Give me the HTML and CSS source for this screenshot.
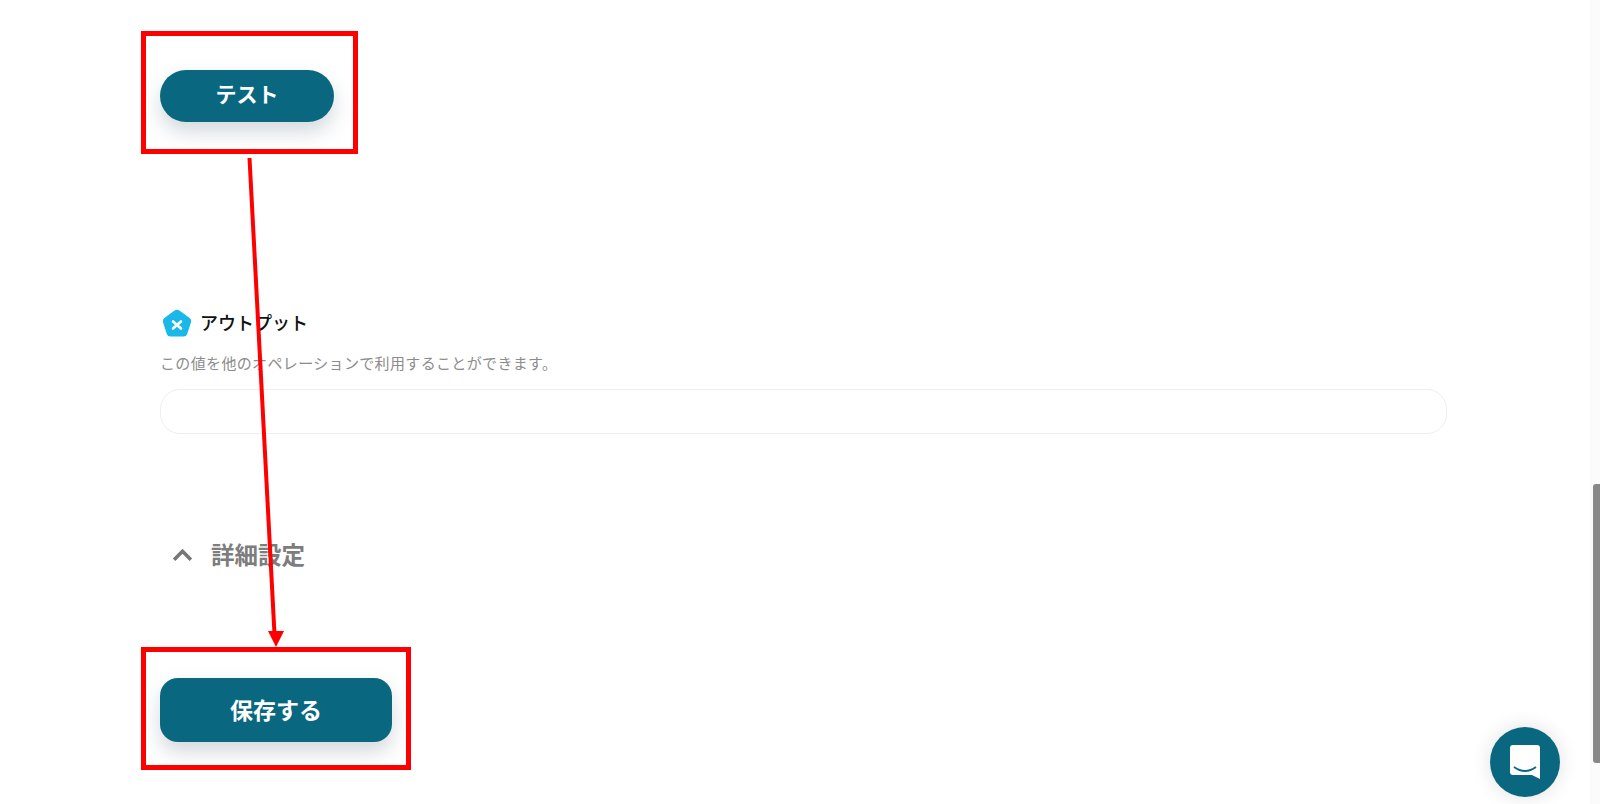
FILE: index.html
```html
<!DOCTYPE html>
<html lang="ja">
<head>
    <meta charset="UTF-8">
    <meta name="viewport" content="width=device-width, initial-scale=1.0">
    <title>アウトプット</title>
    <link rel="stylesheet" href="styles.css">
</head>
<body>
    <div class="page">
        <button class="test-btn">テスト</button>

        <section class="output">
            <div class="output-title">
                <svg class="output-icon" viewBox="0 0 30 30">
                    <path d="M12.6 1.6 Q15 0 17.4 1.6 L27.6 9 Q29.8 10.6 29 13.2 L25.2 25 Q24.4 27.6 21.6 27.6 L8.4 27.6 Q5.6 27.6 4.8 25 L1 13.2 Q0.2 10.6 2.4 9 Z" fill="#1ab8e8"/>
                    <path d="M11 12.5 L19 19.5 M19 12.5 L11 19.5" stroke="#fff" stroke-width="2.6" stroke-linecap="round"/>
                </svg>
                <span class="output-name">アウトプット</span>
            </div>
            <p class="output-desc">この値を他のオペレーションで利用することができます。</p>
            <div class="output-field"></div>
        </section>

        <div class="advanced">
            <svg class="advanced-icon" viewBox="0 0 20 14">
                <path d="M2 12 L10 4 L18 12" fill="none" stroke="#777" stroke-width="3.4"/>
            </svg>
            <span>詳細設定</span>
        </div>

        <button class="save-btn">保存する</button>
    </div>

    <!-- annotations drawn on top of the screenshot -->
    <div class="mark mark-test"></div>
    <div class="mark mark-save"></div>
    <svg class="arrow" width="1600" height="804" viewBox="0 0 1600 804">
        <path d="M249.5 158 L274.5 634" stroke="#f00" stroke-width="4" fill="none"/>
        <path d="M268 631 L284 631 L276 647 Z" fill="#f00"/>
    </svg>

    <div class="scroll-track"></div>
    <div class="scroll-thumb"></div>

    <button class="chat-btn">
        <svg viewBox="0 0 32 36" width="32" height="36">
            <path d="M4 1 H28 Q31 1 31 4 V35 L23 31 H4 Q1 31 1 28 V4 Q1 1 4 1 Z" fill="#fff"/>
            <path d="M5 23 Q16 31 27 23" fill="none" stroke="#0b6880" stroke-width="2"/>
        </svg>
    </button>
</body>
</html>
```

FILE: styles.css
```css
html, body {
    margin: 0;
    padding: 0;
    height: 100%;
    overflow: hidden;
    background: #fff;
}
body {
    font-family: "Noto Sans CJK JP", "Noto Sans", sans-serif;
    color: #111;
}
button {
    font-family: inherit;
    border: none;
    padding: 0;
}
.page {
    width: 1287px;
    padding: 70px 0 0 160px;
}
.test-btn {
    display: block;
    width: 174px;
    height: 52px;
    padding-bottom: 7px;
    border-radius: 26px;
    background: #0a6780;
    color: #fff;
    font-size: 21px;
    font-weight: 700;
    box-shadow: 0 10px 20px rgba(60, 80, 100, 0.22);
}
.output {
    margin-top: 188px;
}
.output-title {
    display: flex;
    align-items: center;
    gap: 8px;
    height: 28px;
    padding-left: 2px;
    font-size: 18px;
    font-weight: 500;
}
.output-icon {
    width: 30px;
    height: 30px;
}
.output-name {
    padding-bottom: 4px;
}
.output-desc {
    margin: 15px 0 0;
    font-size: 15px;
    line-height: 20px;
    letter-spacing: 0.35px;
    color: #8c8c8c;
}
.output-field {
    box-sizing: border-box;
    height: 45px;
    margin-top: 16px;
    border: 1px solid #eeeeee;
    border-radius: 20px;
    background: #fff;
}
.advanced {
    display: flex;
    align-items: center;
    gap: 18px;
    height: 36px;
    margin-top: 102px;
    padding-left: 12px;
    font-size: 23.5px;
    font-weight: 700;
    color: #7d7d7d;
}
.advanced-icon {
    width: 21px;
    height: 15px;
}
.save-btn {
    display: block;
    width: 232px;
    height: 64px;
    margin-top: 106px;
    padding-bottom: 3px;
    border-radius: 18px;
    background: #0a6780;
    color: #fff;
    font-size: 23px;
    font-weight: 700;
    box-shadow: 0 10px 20px rgba(60, 80, 100, 0.22);
}
.mark {
    position: absolute;
    box-sizing: border-box;
    border: 5px solid #f00;
}
.mark-test {
    left: 141px;
    top: 31px;
    width: 217px;
    height: 123px;
}
.mark-save {
    left: 141px;
    top: 647px;
    width: 270px;
    height: 123px;
}
.arrow {
    position: absolute;
    left: 0;
    top: 0;
}
.scroll-track {
    position: absolute;
    left: 1590px;
    top: 0;
    width: 10px;
    height: 804px;
    background: #fbfbfb;
}
.scroll-thumb {
    position: absolute;
    left: 1593px;
    top: 484px;
    width: 7px;
    height: 279px;
    border-radius: 3px 0 0 3px;
    background: #888;
}
.chat-btn {
    position: fixed;
    left: 1490px;
    top: 727px;
    width: 70px;
    height: 70px;
    border-radius: 50%;
    background: #0a6780;
    display: flex;
    align-items: center;
    justify-content: center;
    box-shadow: 0 0 20px rgba(0, 0, 0, 0.12);
}
```
